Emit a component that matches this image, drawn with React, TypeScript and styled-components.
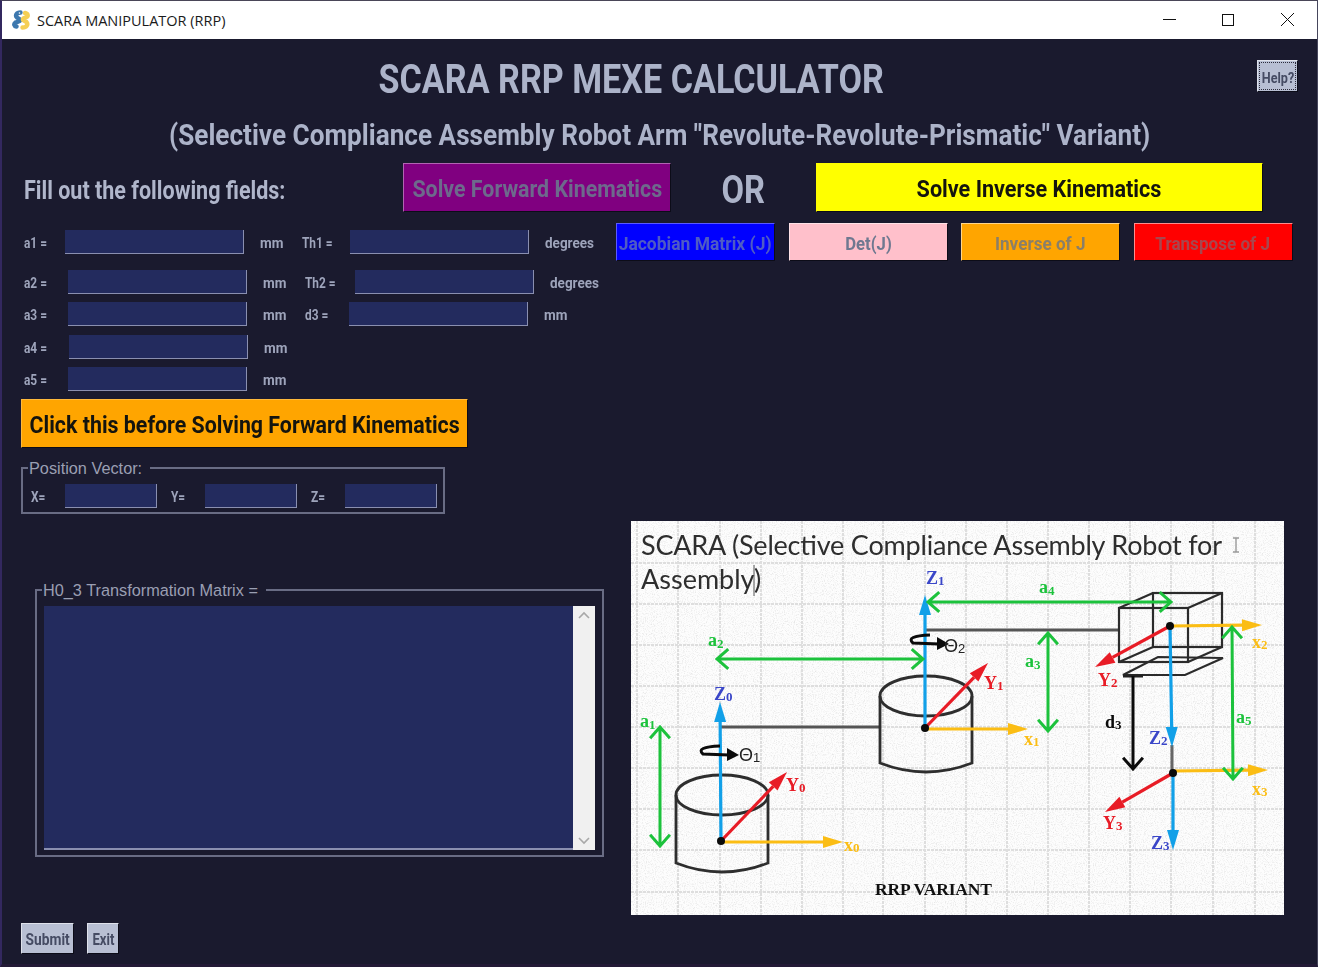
import React from 'react'
import styled, { createGlobalStyle } from 'styled-components'

const GlobalStyle = createGlobalStyle`
    html, body {
        margin: 0;
        padding: 0;
        background: #1a1a2e;
    }
    * {
        box-sizing: border-box;
    }
`

const din = `'Roboto', 'Liberation Sans', sans-serif`

const Window = styled.div`
    width: 1318px;
    height: 967px;
    overflow: hidden;
    background: #1a1a2e;
    border-top: 1px solid #4a4658;
    border-left: 2px solid #33285f;
    border-right: 1px solid #46465c;
    border-bottom: 3px solid #231a36;
    display: flex;
    flex-direction: column;
`

const TitleBar = styled.div`
    height: 38px;
    flex: none;
    background: #fff;
    display: flex;
    align-items: center;
    padding-left: 10px;
    font-family: 'Open Sans', 'Liberation Sans', sans-serif;
    font-size: 14.5px;
    color: #1a1a1a;
`

const AppName = styled.span`
    margin-left: 5px;
    flex: 1;
`

const WinControl = styled.svg`
    display: block;
    width: 59px;
    height: 38px;
`

// the reference uses a narrow DIN face, Roboto squeezed sideways stands in for it
const Squeeze = styled.span<{ $sx: number; $origin?: string }>`
    display: inline-block;
    flex: none;
    white-space: nowrap;
    transform: scaleX(${p => p.$sx});
    transform-origin: ${p => p.$origin ?? 'center'} center;
`

const TitleRow = styled.div`
    height: 79px;
    display: flex;
    align-items: flex-start;
    justify-content: space-between;
    padding: 0 19px 0 377px;
    color: #acb3c9;
    font-family: ${din};
`

const MainTitle = styled.h1`
    width: 505px;
    height: 79px;
    margin: 0;
    padding-top: 2px;
    display: flex;
    align-items: center;
    justify-content: center;
    font-size: 40px;
    line-height: 1;
    font-weight: 700;
`

const RaisedButton = styled.button<{ $bg: string; $fg: string; $w: number; $h: number; $size?: number; $light?: string }>`
    flex: none;
    width: ${p => p.$w}px;
    height: ${p => p.$h}px;
    padding: 3px 0 0;
    display: flex;
    align-items: center;
    justify-content: center;
    background: ${p => p.$bg};
    color: ${p => p.$fg};
    font-family: ${din};
    font-weight: 700;
    font-size: ${p => p.$size ?? 15}px;
    line-height: 1;
    border-style: solid;
    border-width: 1px;
    border-color: ${p => p.$light ?? 'rgba(255,255,255,0.55)'} #0c0c18 #0c0c18 ${p => p.$light ?? 'rgba(255,255,255,0.55)'};
`

const HelpButton = styled(RaisedButton)`
    margin-top: 21px;
    outline: 1px dotted #2c2c3c;
    outline-offset: -3px;
`

const SubTitle = styled.h2`
    margin: 0;
    height: 45px;
    display: flex;
    justify-content: center;
    color: #acb3c9;
    font-family: ${din};
    font-size: 30px;
    line-height: 34px;
    font-weight: 700;
`

const ActionRow = styled.div`
    display: flex;
    align-items: center;
    height: 49px;
    padding-left: 22px;
`

const FillLabel = styled.div`
    width: 379px;
    padding-top: 5px;
    color: #b0b6cb;
    font-family: ${din};
    font-size: 25px;
    font-weight: 700;
`

const OrLabel = styled.div`
    width: 145px;
    padding-top: 4px;
    display: flex;
    justify-content: center;
    color: #acb3c9;
    font-family: ${din};
    font-size: 38px;
    font-weight: 700;
`

const Main = styled.div`
    display: flex;
    flex: 1;
`

const LeftColumn = styled.div`
    width: 614px;
    flex: none;
    padding: 18px 0 0 19px;
    display: flex;
    flex-direction: column;
`

const FieldRow = styled.div<{ $mb?: number }>`
    display: flex;
    align-items: center;
    height: 24px;
    padding-left: 3px;
    margin-bottom: ${p => p.$mb ?? 8}px;
`

const FieldLabel = styled.label<{ $w: number }>`
    width: ${p => p.$w}px;
    flex: none;
    padding-top: 2px;
    color: #9ea4bb;
    font-family: ${din};
    font-size: 14px;
    font-weight: 700;
    white-space: nowrap;
    transform: scaleX(0.85);
    transform-origin: left center;
`

const FieldInput = styled.input<{ $w?: number }>`
    width: ${p => p.$w ?? 179}px;
    height: 24px;
    flex: none;
    padding: 0;
    background: #232b5e;
    border: none;
    border-right: 1px solid #8a8fb0;
    border-bottom: 1px solid #8a8fb0;
    outline: none;
`

const Unit = styled.span`
    width: 42px;
    flex: none;
    margin-left: 16px;
    padding-top: 2px;
    color: #9ea4bb;
    font-family: ${din};
    font-size: 15px;
    font-weight: 700;
    white-space: nowrap;
    transform: scaleX(0.9);
    transform-origin: left center;
`

const GroupBox = styled.fieldset<{ $w: number; $h: number; $mt: number; $ml?: number }>`
    width: ${p => p.$w}px;
    height: ${p => p.$h}px;
    margin: ${p => p.$mt}px 0 0 ${p => p.$ml ?? 0}px;
    padding: 0;
    min-width: 0;
    border: 2px solid #696c84;
`

const GroupLegend = styled.legend`
    margin-left: 5px;
    padding: 0 8px 0 1px;
    color: #9a9fb3;
    font-family: 'Liberation Sans', sans-serif;
    font-size: 16.3px;
    line-height: 18px;
`

const VectorRow = styled.div`
    display: flex;
    align-items: center;
    gap: 14px;
    padding: 7px 0 0 8px;
`

const VectorCell = styled.div`
    display: flex;
    align-items: center;
`

const MatrixBody = styled.div`
    display: flex;
    height: 244px;
    margin: 7px 0 0 7px;
`

const MatrixArea = styled.div`
    width: 529px;
    background: #232b5e;
    border-bottom: 2px solid #8a8fb0;
`

const ScrollTrack = styled.div`
    width: 22px;
    background: #f0f0f0;
    display: flex;
    flex-direction: column;
    justify-content: space-between;
    align-items: center;
    padding: 5px 0;
`

const Chevron = styled.svg`
    display: block;
    width: 12px;
    height: 8px;
`

const BottomButtons = styled.div`
    display: flex;
    gap: 13px;
    margin-top: 66px;
`

const RightColumn = styled.div`
    flex: 1;
    display: flex;
    flex-direction: column;
`

const JacobianRow = styled.div`
    display: flex;
    gap: 13.5px;
    margin-top: 11px;
`

const Diagram = styled.svg`
    display: block;
    width: 653px;
    height: 394px;
    margin: 260px 0 0 15px;
    background: #fdfdfd;
    filter: blur(0.45px);
`

const Sentence = styled.text`
    font-family: 'Lato', 'Open Sans', sans-serif;
    font-size: 27px;
    fill: #2e2e2e;
`

const Mark = styled.text<{ $c: string }>`
    font-family: 'Liberation Serif', serif;
    font-weight: 700;
    font-size: 18px;
    fill: ${p => p.$c};
`

const Sub = styled.tspan`
    font-size: 13px;
`

const ThetaMark = styled.text`
    font-family: 'Liberation Sans', sans-serif;
    font-size: 18px;
    fill: #222;
`

const VariantMark = styled.text`
    font-family: 'Liberation Serif', serif;
    font-weight: 700;
    font-size: 17.5px;
    fill: #111;
`

const GREEN = '#1cc23c'
const BLUE = '#12a0e8'
const RED = '#e81c26'
const YELLOW = '#fbbd14'
const LABEL_BLUE = '#3a46c8'

// arrow with a solid head at its end
const SolidArrow = ({ x1, y1, x2, y2, c, hl = 20, hw = 6 }: { x1: number; y1: number; x2: number; y2: number; c: string; hl?: number; hw?: number }) => {
    const a = Math.atan2(y2 - y1, x2 - x1)
    const bx = x2 - Math.cos(a) * hl
    const by = y2 - Math.sin(a) * hl
    const nx = -Math.sin(a) * hw
    const ny = Math.cos(a) * hw
    return (
        <g>
            <line x1={x1} y1={y1} x2={bx} y2={by} stroke={c} strokeWidth={3.2} />
            <polygon points={`${x2},${y2} ${bx + nx},${by + ny} ${bx - nx},${by - ny}`} fill={c} />
        </g>
    )
}

// line with open "v" heads, on the end or on both ends
const OpenArrow = ({ x1, y1, x2, y2, c, both }: { x1: number; y1: number; x2: number; y2: number; c: string; both?: boolean }) => {
    const head = (x: number, y: number, a: number) => {
        const s = 0.72
        const l = 15
        return `M${x - Math.cos(a - s) * l} ${y - Math.sin(a - s) * l} L${x} ${y} L${x - Math.cos(a + s) * l} ${y - Math.sin(a + s) * l}`
    }
    const a = Math.atan2(y2 - y1, x2 - x1)
    return (
        <path
            d={`M${x1} ${y1} L${x2} ${y2} ${head(x2, y2, a)} ${both ? head(x1, y1, a + Math.PI) : ''}`}
            fill="none"
            stroke={c}
            strokeWidth={3}
        />
    )
}

const Cylinder = ({ cx, top, rx, ry, bottom }: { cx: number; top: number; rx: number; ry: number; bottom: number }) => (
    <g fill="none" stroke="#2e2e2e" strokeWidth={2.8}>
        <ellipse cx={cx} cy={top + ry} rx={rx} ry={ry} />
        <path d={`M${cx - rx} ${top + ry} V${bottom} Q${cx} ${bottom + 18} ${cx + rx} ${bottom} V${top + ry}`} />
    </g>
)

const Joint = ({ x, y }: { x: number; y: number }) => <circle cx={x} cy={y} r={4} fill="#0b0b0b" />

const RotationMark = ({ x, y }: { x: number; y: number }) => (
    <g>
        <path d={`M${x + 17} ${y - 8} Q${x - 8} ${y - 7} ${x} ${y} L${x + 26} ${y + 1}`} fill="none" stroke="#0b0b0b" strokeWidth={3} />
        <polygon points={`${x + 36},${y + 1} ${x + 24},${y - 6} ${x + 24},${y + 7}`} fill="#0b0b0b" />
    </g>
)

const gridXs = [637, 678, 720, 761, 802, 843, 883, 925, 966, 1007, 1048, 1089, 1130, 1171, 1213, 1255]
const gridYs = [563, 604, 645, 686, 727, 768, 809, 850, 892]

const ScaraDiagram = () => (
    <Diagram viewBox="631 521 653 394">
        <filter id="speckle" x="0" y="0" width="100%" height="100%">
            <feTurbulence type="fractalNoise" baseFrequency="0.9" numOctaves="2" seed="4" />
            <feColorMatrix values="0 0 0 0 0.6  0 0 0 0 0.6  0 0 0 0 0.6  0 0 0 1.2 -0.56" />
        </filter>
        <rect x={631} y={521} width={653} height={394} filter="url(#speckle)" />
        {gridXs.map(x => <line key={x} x1={x} y1={521} x2={x} y2={915} stroke="#dedede" strokeWidth={2} strokeDasharray="3 1" />)}
        {gridYs.map(y => <line key={y} x1={631} y1={y} x2={1284} y2={y} stroke="#dedede" strokeWidth={2} strokeDasharray="3 1" />)}

        <Sentence x={641} y={555} textLength={581}>SCARA (Selective Compliance Assembly Robot for</Sentence>
        <Sentence x={641} y={589}>Assembly)</Sentence>
        <line x1={754} y1={565} x2={754} y2={596} stroke="#555" strokeWidth={1} />
        <path d="M1233 538 H1239 M1236 538 V552 M1233 552 H1239" stroke="#999" strokeWidth={1.4} fill="none" />

        {/* links */}
        <line x1={721} y1={727} x2={880} y2={727} stroke="#555" strokeWidth={3} />
        <line x1={926} y1={630} x2={1119} y2={630} stroke="#555" strokeWidth={3} />
        <line x1={1172} y1={745} x2={1172} y2={773} stroke="#666" strokeWidth={3} />

        <Cylinder cx={722} top={775} rx={46} ry={20} bottom={863} />
        <Cylinder cx={926} top={676} rx={46} ry={20} bottom={763} />

        {/* box and plate */}
        <g fill="none" stroke="#2b2b2b" strokeWidth={2.2}>
            <rect x={1119} y={608} width={69} height={54} />
            <rect x={1153} y={593} width={69} height={54} />
            <path d="M1119 608 L1153 593 M1188 608 L1222 593 M1188 662 L1222 647 M1119 662 L1153 647" />
            <path d="M1123 675 H1185 L1223 658 L1158 657 Z" />
        </g>
        <line x1={1123} y1={676} x2={1143} y2={676} stroke="#222" strokeWidth={3} />
        <OpenArrow x1={1133} y1={676} x2={1133} y2={769} c="#0b0b0b" />

        {/* frame 0 */}
        <SolidArrow x1={721} y1={841} x2={720} y2={702} c={BLUE} />
        <SolidArrow x1={721} y1={841} x2={787} y2={772} c={RED} />
        <SolidArrow x1={721} y1={842} x2={843} y2={842} c={YELLOW} />
        <Joint x={721} y={841} />
        <RotationMark x={703} y={754} />

        {/* frame 1 */}
        <SolidArrow x1={925} y1={728} x2={925} y2={595} c={BLUE} />
        <SolidArrow x1={925} y1={728} x2={988} y2={663} c={RED} />
        <SolidArrow x1={925} y1={729} x2={1028} y2={729} c={YELLOW} />
        <Joint x={925} y={728} />
        <RotationMark x={913} y={643} />

        {/* frame 2 */}
        <SolidArrow x1={1170} y1={626} x2={1172} y2={747} c={BLUE} />
        <SolidArrow x1={1170} y1={626} x2={1095} y2={667} c={RED} />
        <SolidArrow x1={1170} y1={626} x2={1262} y2={625} c={YELLOW} />
        <Joint x={1170} y={626} />

        {/* frame 3 */}
        <SolidArrow x1={1173} y1={773} x2={1173} y2={850} c={BLUE} />
        <SolidArrow x1={1173} y1={773} x2={1105} y2={812} c={RED} />
        <SolidArrow x1={1173} y1={771} x2={1268} y2={770} c={YELLOW} />
        <Joint x={1173} y={773} />

        {/* dimensions */}
        <OpenArrow x1={660} y1={727} x2={660} y2={846} c={GREEN} both />
        <OpenArrow x1={717} y1={659} x2={923} y2={659} c={GREEN} both />
        <OpenArrow x1={1048} y1={633} x2={1048} y2={731} c={GREEN} both />
        <OpenArrow x1={928} y1={602} x2={1171} y2={602} c={GREEN} both />
        <OpenArrow x1={1232} y1={627} x2={1233} y2={779} c={GREEN} both />

        <Mark $c={GREEN} x={640} y={727}>a<Sub dy={2}>1</Sub></Mark>
        <Mark $c={GREEN} x={708} y={646}>a<Sub dy={2}>2</Sub></Mark>
        <Mark $c={GREEN} x={1025} y={667}>a<Sub dy={2}>3</Sub></Mark>
        <Mark $c={GREEN} x={1039} y={593}>a<Sub dy={2}>4</Sub></Mark>
        <Mark $c={GREEN} x={1236} y={723}>a<Sub dy={2}>5</Sub></Mark>
        <Mark $c={LABEL_BLUE} x={714} y={700}>Z<Sub dy={1}>0</Sub></Mark>
        <Mark $c={LABEL_BLUE} x={926} y={584}>Z<Sub dy={1}>1</Sub></Mark>
        <Mark $c={LABEL_BLUE} x={1149} y={744}>Z<Sub dy={1}>2</Sub></Mark>
        <Mark $c={LABEL_BLUE} x={1151} y={849}>Z<Sub dy={1}>3</Sub></Mark>
        <Mark $c={RED} x={786} y={791}>Y<Sub dy={1}>0</Sub></Mark>
        <Mark $c={RED} x={984} y={689}>Y<Sub dy={1}>1</Sub></Mark>
        <Mark $c={RED} x={1098} y={686}>Y<Sub dy={1}>2</Sub></Mark>
        <Mark $c={RED} x={1103} y={829}>Y<Sub dy={1}>3</Sub></Mark>
        <Mark $c={YELLOW} x={844} y={851}>x<Sub dy={1}>0</Sub></Mark>
        <Mark $c={YELLOW} x={1024} y={745}>x<Sub dy={1}>1</Sub></Mark>
        <Mark $c={YELLOW} x={1252} y={648}>x<Sub dy={1}>2</Sub></Mark>
        <Mark $c={YELLOW} x={1252} y={795}>x<Sub dy={1}>3</Sub></Mark>
        <Mark $c="#0b0b0b" x={1105} y={728}>d<Sub dy={1}>3</Sub></Mark>

        <ThetaMark x={739} y={761}>Θ<Sub dy={1}>1</Sub></ThetaMark>
        <ThetaMark x={944} y={652}>Θ<Sub dy={1}>2</Sub></ThetaMark>

        <VariantMark x={875} y={895} textLength={117}>RRP VARIANT</VariantMark>
    </Diagram>
)

const PythonIcon = () => (
    <svg width="20" height="20" viewBox="0 0 20 20">
        <path d="M8.5 2.5 C4.5 2.5 3 5.5 5 7.5 L8 9.5 C9 11.5 5.5 11.5 3.5 12.5 C1.5 14 2 16 4.5 16.5" fill="none" stroke="#3d78ae" strokeWidth="4.4" strokeLinecap="round" />
        <path d="M10.5 17.5 C14.5 17.5 16.5 14.5 14.5 12 L11 10 C10 8 13.5 8 14.5 7 C16.5 6 16 3.5 13 3" fill="none" stroke="#f5cf55" strokeWidth="4.4" strokeLinecap="round" />
        <circle cx="7.5" cy="3" r="0.8" fill="#fff" />
    </svg>
)

const TEXT_GREY = '#6f7890'

const App = () => {
    return (
        <Window>
            <GlobalStyle />
            <TitleBar>
                <PythonIcon />
                <AppName>SCARA MANIPULATOR (RRP)</AppName>
                <WinControl viewBox="0 0 59 38">
                    <line x1="23" y1="18.5" x2="36" y2="18.5" stroke="#111" strokeWidth="1" />
                </WinControl>
                <WinControl viewBox="0 0 59 38">
                    <rect x="23.5" y="13.5" width="11" height="11" fill="none" stroke="#111" strokeWidth="1" />
                </WinControl>
                <WinControl viewBox="0 0 59 38">
                    <path d="M23 12 L36 25 M36 12 L23 25" stroke="#111" strokeWidth="1" />
                </WinControl>
            </TitleBar>

            <TitleRow>
                <MainTitle><Squeeze $sx={0.853}>SCARA RRP MEXE CALCULATOR</Squeeze></MainTitle>
                <HelpButton $bg="#b8bfd3" $fg="#454b63" $w={41} $h={32} $size={14}><Squeeze $sx={0.9}>Help?</Squeeze></HelpButton>
            </TitleRow>

            <SubTitle><Squeeze $sx={0.872}>(Selective Compliance Assembly Robot Arm "Revolute-Revolute-Prismatic" Variant)</Squeeze></SubTitle>

            <ActionRow>
                <FillLabel><Squeeze $sx={0.86} $origin="left">Fill out the following fields:</Squeeze></FillLabel>
                <RaisedButton $bg="#800080" $fg="#6d6a8c" $w={268} $h={49} $size={24} $light="#b264b2"><Squeeze $sx={0.89}>Solve Forward Kinematics</Squeeze></RaisedButton>
                <OrLabel><Squeeze $sx={0.86}>OR</Squeeze></OrLabel>
                <RaisedButton $bg="#ffff00" $fg="#14140e" $w={447} $h={49} $size={24} $light="#ffff00"><Squeeze $sx={0.9}>Solve Inverse Kinematics</Squeeze></RaisedButton>
            </ActionRow>

            <Main>
                <LeftColumn>
                    <FieldRow $mb={16}>
                        <FieldLabel $w={41}>a1 =</FieldLabel>
                        <FieldInput />
                        <Unit>mm</Unit>
                        <FieldLabel $w={48}>Th1 =</FieldLabel>
                        <FieldInput />
                        <Unit>degrees</Unit>
                    </FieldRow>
                    <FieldRow>
                        <FieldLabel $w={44}>a2 =</FieldLabel>
                        <FieldInput />
                        <Unit>mm</Unit>
                        <FieldLabel $w={50}>Th2 =</FieldLabel>
                        <FieldInput />
                        <Unit>degrees</Unit>
                    </FieldRow>
                    <FieldRow $mb={9}>
                        <FieldLabel $w={44}>a3 =</FieldLabel>
                        <FieldInput />
                        <Unit>mm</Unit>
                        <FieldLabel $w={44}>d3 =</FieldLabel>
                        <FieldInput />
                        <Unit>mm</Unit>
                    </FieldRow>
                    <FieldRow>
                        <FieldLabel $w={45}>a4 =</FieldLabel>
                        <FieldInput />
                        <Unit>mm</Unit>
                    </FieldRow>
                    <FieldRow>
                        <FieldLabel $w={44}>a5 =</FieldLabel>
                        <FieldInput />
                        <Unit>mm</Unit>
                    </FieldRow>

                    <RaisedButton $bg="#ffa500" $fg="#14140e" $w={447} $h={49} $size={24} $light="#ffb93c"><Squeeze $sx={0.89}>Click this before Solving Forward Kinematics</Squeeze></RaisedButton>

                    <GroupBox $w={424} $h={55} $mt={11}>
                        <GroupLegend>Position Vector:</GroupLegend>
                        <VectorRow>
                            <VectorCell>
                                <FieldLabel $w={34}>X=</FieldLabel>
                                <FieldInput $w={92} />
                            </VectorCell>
                            <VectorCell>
                                <FieldLabel $w={34}>Y=</FieldLabel>
                                <FieldInput $w={92} />
                            </VectorCell>
                            <VectorCell>
                                <FieldLabel $w={34}>Z=</FieldLabel>
                                <FieldInput $w={92} />
                            </VectorCell>
                        </VectorRow>
                    </GroupBox>

                    <GroupBox $w={569} $h={276} $mt={67} $ml={14}>
                        <GroupLegend>H0_3 Transformation Matrix =</GroupLegend>
                        <MatrixBody>
                            <MatrixArea />
                            <ScrollTrack>
                                <Chevron viewBox="0 0 12 8">
                                    <path d="M1 7 L6 2 L11 7" fill="none" stroke="#a8a8a8" strokeWidth="1.6" />
                                </Chevron>
                                <Chevron viewBox="0 0 12 8">
                                    <path d="M1 1 L6 6 L11 1" fill="none" stroke="#a8a8a8" strokeWidth="1.6" />
                                </Chevron>
                            </ScrollTrack>
                        </MatrixBody>
                    </GroupBox>

                    <BottomButtons>
                        <RaisedButton $bg="#b8bfd3" $fg="#454b63" $w={53} $h={31} $size={16}><Squeeze $sx={0.86}>Submit</Squeeze></RaisedButton>
                        <RaisedButton $bg="#b8bfd3" $fg="#454b63" $w={32} $h={31} $size={16}><Squeeze $sx={0.82}>Exit</Squeeze></RaisedButton>
                    </BottomButtons>
                </LeftColumn>

                <RightColumn>
                    <JacobianRow>
                        <RaisedButton $bg="#0000ff" $fg="#4f5cc4" $w={159} $h={38} $size={19} $light="#5a5aff"><Squeeze $sx={0.92}>Jacobian Matrix (J)</Squeeze></RaisedButton>
                        <RaisedButton $bg="#ffc0cb" $fg={TEXT_GREY} $w={159} $h={38} $size={19}><Squeeze $sx={0.88}>Det(J)</Squeeze></RaisedButton>
                        <RaisedButton $bg="#ffa500" $fg="#8a7f68" $w={159} $h={38} $size={19}><Squeeze $sx={0.9}>Inverse of J</Squeeze></RaisedButton>
                        <RaisedButton $bg="#ff0000" $fg="#a8464e" $w={159} $h={38} $size={19}><Squeeze $sx={0.9}>Transpose of J</Squeeze></RaisedButton>
                    </JacobianRow>
                    <ScaraDiagram />
                </RightColumn>
            </Main>
        </Window>
    )
}

export default App
